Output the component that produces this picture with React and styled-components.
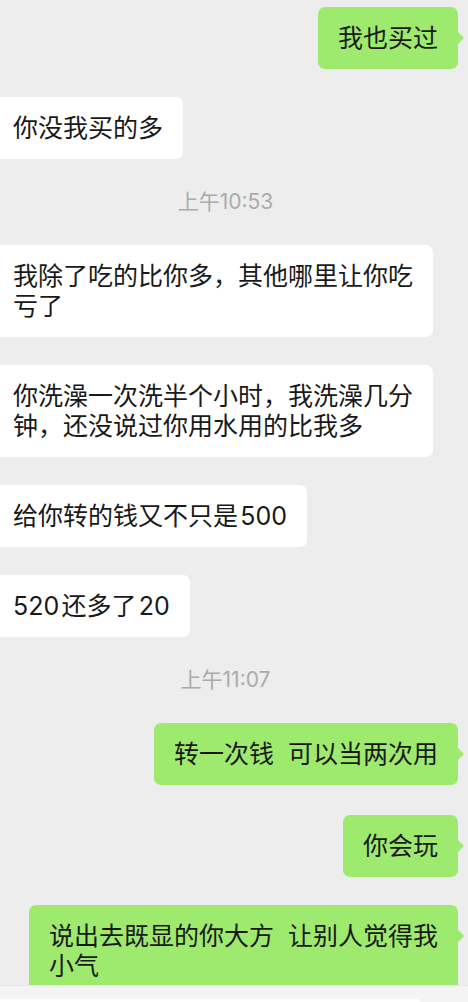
import React from 'react';
import styled, { createGlobalStyle } from 'styled-components';

const GlobalStyle = createGlobalStyle`
  html, body {
    margin: 0;
    padding: 0;
    background: #ededed;
  }
  body {
    font-family: "Inter", "Noto Sans CJK SC", sans-serif;
  }
`;

const Screen = styled.div`
  width: 468px;
  height: 1002px;
  overflow: hidden;
  display: flex;
  flex-direction: column;
  background: #ededed;
`;

// the screenshot is cropped a little on the left, so the list is wider than the screen
const ChatArea = styled.div`
  flex: 1;
  overflow: hidden;
  margin-left: -17px;
  width: 485px;
`;

const MessageList = styled.div`
  display: flex;
  flex-direction: column;
  gap: 28px;
  padding: 7px 10px 0;
`;

const Row = styled.div`
  display: flex;
  justify-content: ${(p) => (p.$mine ? 'flex-end' : 'flex-start')};
  margin-top: ${(p) => p.$extra || 0}px;
`;

const Bubble = styled.div`
  position: relative;
  padding: 16px 20px;
  border-radius: 7px;
  background: ${(p) => (p.$mine ? '#9eea6e' : '#ffffff')};
  color: #191919;
  font-size: 25px;
  line-height: 30px;
  white-space: pre;

  &::after {
    content: '';
    position: absolute;
    top: 25px;
    ${(p) => (p.$mine ? 'right: -6px;' : 'left: -6px;')}
    border-top: 6px solid transparent;
    border-bottom: 6px solid transparent;
    ${(p) =>
      p.$mine
        ? 'border-left: 6px solid #9eea6e;'
        : 'border-right: 6px solid #ffffff;'}
  }
`;

const TimeStamp = styled.div`
  text-align: center;
  font-size: 21px;
  line-height: 30px;
  color: #ababab;
`;

const InputBar = styled.div`
  height: 17px;
  flex-shrink: 0;
  background: #f4f4f4;
  border-top: 1px solid #e6e6e6;
  padding: 13px 48px 0 0;
  box-sizing: border-box;
  display: flex;
`;

const InputBox = styled.div`
  flex: 1;
  background: #ffffff;
  border-radius: 0 6px 0 0;
`;

const messages = [
  { mine: true, text: '我也买过' },
  { mine: false, text: '你没我买的多' },
  { time: '上午10:53' },
  { mine: false, text: '我除了吃的比你多，其他哪里让你吃\n亏了' },
  { mine: false, text: '你洗澡一次洗半个小时，我洗澡几分\n钟，还没说过你用水用的比我多' },
  { mine: false, text: '给你转的钱又不只是\u200a500' },
  { mine: false, text: '520\u200a还多了\u200a20' },
  { time: '上午11:07' },
  { mine: true, text: '转一次钱  可以当两次用' },
  { mine: true, text: '你会玩', extra: 2 },
  { mine: true, text: '说出去既显的你大方  让别人觉得我\n小气' },
];

export default function App() {
  return (
    <>
      <GlobalStyle />
      <Screen>
        <ChatArea>
          <MessageList>
            {messages.map((m, i) =>
              m.time ? (
                <TimeStamp key={i}>{m.time}</TimeStamp>
              ) : (
                <Row key={i} $mine={m.mine} $extra={m.extra}>
                  <Bubble $mine={m.mine}>{m.text}</Bubble>
                </Row>
              )
            )}
          </MessageList>
        </ChatArea>
        <InputBar>
          <InputBox />
        </InputBar>
      </Screen>
    </>
  );
}
